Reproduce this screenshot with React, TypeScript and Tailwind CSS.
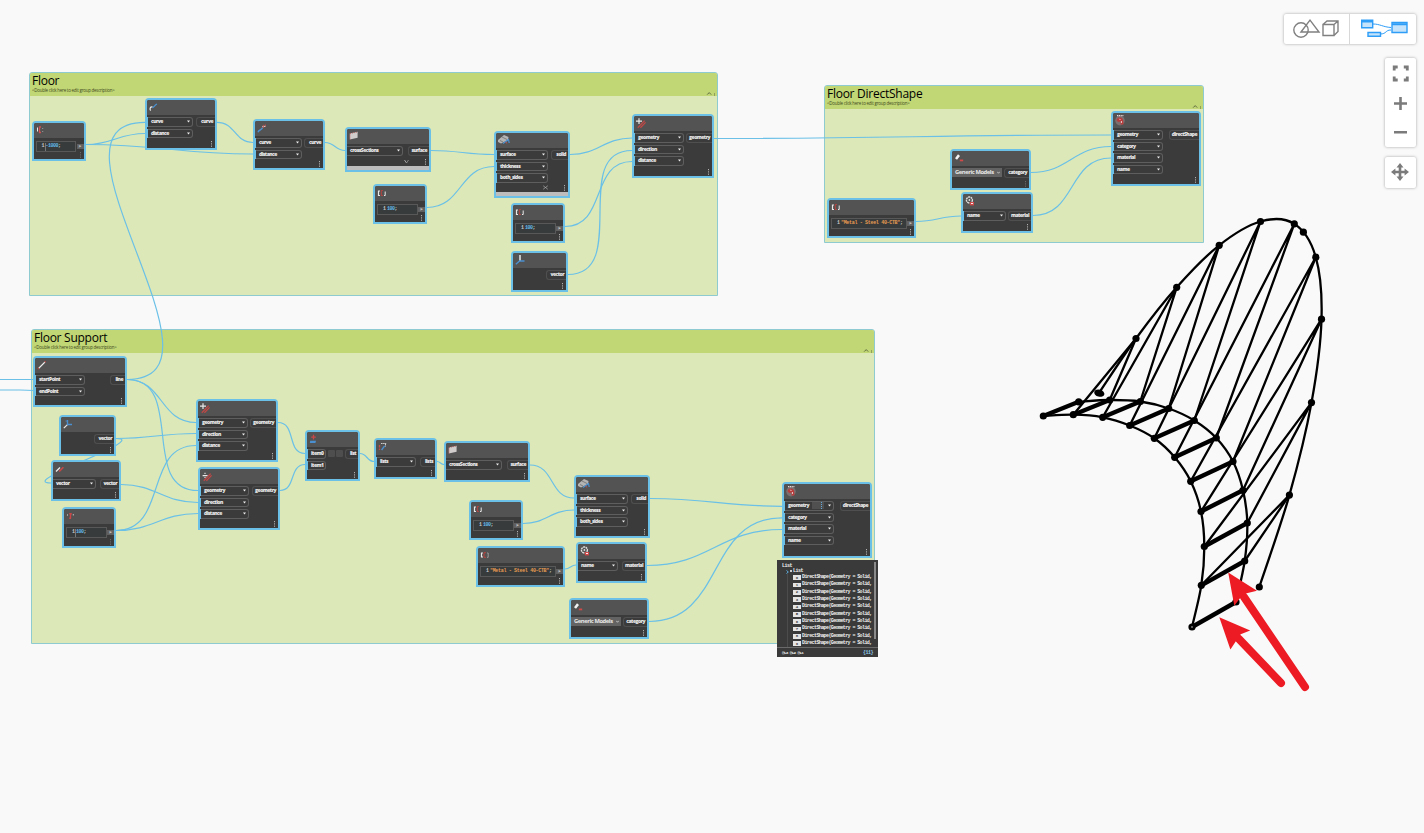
import React from "react";

type In = { label: string; w?: number; chips?: boolean };
type NodeDef = {
  x: number; y: number; w: number; h: number; icon: string;
  ins?: In[]; inW?: number; out?: string; outW?: number;
  code?: { n: string; text: string; kind: "num" | "str"; caret?: boolean };
  select?: string; strip?: boolean; faint?: boolean; plain?: boolean; mark?: "down" | "wave";
};

const L = (...names: string[]): In[] => names.map((label) => ({ label }));

const nodes: NodeDef[] = [
  { x: 31.5, y: 121, w: 54, h: 40, icon: "code1", code: { n: "1", text: "-1000", kind: "num", caret: true }, faint: true },
  { x: 145, y: 98, w: 72, h: 52, icon: "curveA", ins: L("curve", "distance"), inW: 45, out: "curve", outW: 19 },
  { x: 253, y: 119, w: 72, h: 51, icon: "curveB", ins: L("curve", "distance"), inW: 46, out: "curve", outW: 19 },
  { x: 345, y: 127, w: 86, h: 45, icon: "loft", ins: L("crossSections"), inW: 56, out: "surface", outW: 21, strip: true, mark: "down", plain: true },
  { x: 373, y: 184, w: 54, h: 40, icon: "code2", code: { n: "1", text: "100", kind: "num" } },
  { x: 494, y: 131, w: 76, h: 67, icon: "solid", ins: L("surface", "thickness", "both_sides"), inW: 51, out: "solid", outW: 17, strip: true, mark: "wave" },
  { x: 511, y: 203, w: 54, h: 40, icon: "code2", code: { n: "1", text: "100", kind: "num" } },
  { x: 511, y: 251, w: 57, h: 41, icon: "vectorZ", out: "vector", outW: 20 },
  { x: 632, y: 114, w: 82, h: 64, icon: "move", ins: L("geometry", "direction", "distance"), inW: 49, out: "geometry", outW: 26 },
  { x: 1111, y: 111, w: 90, h: 75, icon: "revit", ins: L("geometry", "category", "material", "name"), inW: 49, out: "directShape", outW: 30 },
  { x: 950, y: 149, w: 81, h: 41, icon: "tag", select: "Generic Models", out: "category", outW: 25, faint: true },
  { x: 961, y: 192, w: 72, h: 41, icon: "material", ins: L("name"), inW: 42, out: "material", outW: 23 },
  { x: 827, y: 198, w: 89, h: 40, icon: "code3", code: { n: "1", text: '"Metal - Steel 40-CTB"', kind: "str" } },
  { x: 33, y: 356, w: 94, h: 51, icon: "line", ins: L("startPoint", "endPoint"), inW: 49, out: "line", outW: 15 },
  { x: 59, y: 415, w: 57, h: 41, icon: "vectorX", out: "vector", outW: 20 },
  { x: 51, y: 460, w: 70, h: 41, icon: "reverse", ins: L("vector"), inW: 43, out: "vector", outW: 19, plain: true },
  { x: 62, y: 507, w: 54, h: 41, icon: "code4", code: { n: "1", text: "100", kind: "num", caret: true }, faint: true },
  { x: 196, y: 399, w: 82, h: 63, icon: "move", ins: L("geometry", "direction", "distance"), inW: 49, out: "geometry", outW: 26 },
  { x: 198, y: 467, w: 82, h: 63, icon: "moveDown", ins: L("geometry", "direction", "distance"), inW: 48, out: "geometry", outW: 26 },
  { x: 305, y: 430, w: 55, h: 51, icon: "list", ins: [{ label: "item0", w: 18, chips: true }, { label: "item1", w: 18 }], out: "list", outW: 13 },
  { x: 374, y: 438, w: 63, h: 41, icon: "flatten", ins: L("lists"), inW: 39, out: "lists", outW: 15 },
  { x: 444, y: 441, w: 86, h: 41, icon: "loft", ins: L("crossSections"), inW: 56, out: "surface", outW: 21, plain: true },
  { x: 469, y: 500, w: 54, h: 40, icon: "code2", code: { n: "1", text: "100", kind: "num" } },
  { x: 476, y: 546, w: 89, h: 41, icon: "code4b", code: { n: "1", text: '"Metal - Steel 40-CTB"', kind: "str" } },
  { x: 574, y: 475, w: 76, h: 63, icon: "solid", ins: L("surface", "thickness", "both_sides"), inW: 51, out: "solid", outW: 17 },
  { x: 576, y: 542, w: 71, h: 41, icon: "material", ins: L("name"), inW: 40, out: "material", outW: 23, plain: true },
  { x: 569, y: 598, w: 80, h: 41, icon: "tag", select: "Generic Models", out: "category", outW: 24 },
  { x: 782, y: 482, w: 90, h: 76, icon: "revit", ins: [{ label: "geometry", chips: true }, ...L("category", "material", "name")], inW: 49, out: "directShape", outW: 30 },
];

const groups = [
  { x: 29, y: 72, w: 689, h: 224, title: "Floor" },
  { x: 824, y: 85, w: 380, h: 158, title: "Floor DirectShape" },
  { x: 31, y: 329, w: 844, h: 315, title: "Floor Support" },
];

const wires: number[][] = [
  [86, 144.5, 145, 133.5], [86, 144.5, 253, 154], [127, 379.5, 145, 122.3], [217, 122.3, 253, 142.5],
  [325, 142.5, 345, 150.5], [431, 150.5, 494, 154.5], [427, 207.5, 494, 166.5], [570, 154.5, 632, 138],
  [565, 226.5, 632, 161.5], [568, 274.5, 632, 150.5], [714, 138.5, 1111, 135], [1031, 172.5, 1111, 146.5],
  [1033, 215.5, 1111, 158], [916, 221.5, 961, 216], [127, 379.5, 196, 422.5], [127, 379.5, 198, 490.5],
  [116, 438.5, 196, 433.5], [116, 438.5, 51, 483], [116, 530.5, 196, 445.5], [116, 530.5, 198, 513.5],
  [121, 484.5, 198, 502.5], [278, 422.5, 305, 453.5], [280, 490.5, 305, 464.5], [360, 453.5, 374, 461.5],
  [437, 461.5, 444, 464.5], [530, 465, 574, 498], [523, 523.5, 574, 510], [565, 569, 576, 565],
  [650, 498.5, 782, 506.3], [647, 565.5, 782, 529.5], [649, 621.5, 782, 517.8],
];

const wirePath = ([a, b, c, d]: number[]) => {
  const o = Math.hypot(c - a, d - b) * 0.45;
  return `M${a} ${b}C${a + o} ${b} ${c - o} ${d} ${c} ${d}`;
};

const W = "#e8e8e8", R = "#b9433f", B = "#4a90d0";
const brackets = (a: string, b: string, c: string) => (
  <g fill="none">
    <path d="M3 3H1.5V7.5H3" stroke={a} strokeWidth="1.2" />
    <path d="M5.8 2.5H4.3V7.5H5.8" stroke={b} />
    <path d="M7 7.5H8.2V3.5" stroke={c} strokeWidth="1" />
  </g>
);
const icons: Record<string, React.ReactNode> = {
  code1: (
    <g fill="none"><path d="M1.5 2.5V6.5" stroke={W} /><path d="M5 2H3.5V7.5H5" stroke="#d05050" strokeWidth="1.3" /><path d="M6.7 3v1M6.7 6v1" stroke="#999" /></g>
  ),
  code2: brackets(W, R, W),
  code3: brackets(W, R, W),
  code4: (
    <g fill="none"><path d="M1.5 3V5" stroke="#999" /><path d="M3.2 2.7H5.8M4.5 2.7V7.3M3.2 7.3H5" stroke="#c84848" strokeWidth="1.4" /><path d="M7.3 3V4.5" stroke="#bbb" /></g>
  ),
  code4b: (
    <g fill="none"><path d="M3 3H1.5V7H3" stroke={W} strokeWidth="1.2" /><path d="M6 2.7H4V7.3H6" stroke={R} /><path d="M7 3H8.2V7.3H7" stroke="#999" /></g>
  ),
  curveA: (
    <g fill="none"><path d="M3.6 5C1 4.5 .5 7 1.6 8.7" stroke={W} strokeWidth="1.2" /><path d="M3.3 5.5C5 6 5.5 3 8 2" stroke={B} strokeWidth="1.3" /></g>
  ),
  curveB: (
    <g fill="none"><path d="M1 9.3C2 6 4 8 5.5 4.8" stroke={B} strokeWidth="1.4" /><path d="M5.3 3.6L8.6 3.2" stroke="#ddd" strokeWidth="1.1" /><path d="M6.3 1.8V5M8.3 1.5V3.5" stroke="#c05050" strokeWidth="1" /></g>
  ),
  loft: (
    <g><path d="M.8 2.4L8.6 .8V6.8L.8 8.6Z" fill="#d0cccc" /><path d="M1 2.5L8.6 1M1 8.5V3" stroke={R} strokeWidth=".7" strokeDasharray="1 1" fill="none" /></g>
  ),
  solid: (
    <g><path d="M0 5L6 0L10.5 2L10 5L3 8.6L0 7Z" fill="#b4b4b4" /><path d="M4 2L9 4.5M2 5.5L5 7" stroke="#777" strokeWidth=".9" fill="none" /><path d="M5 8.5L10.5 4.5L11.2 8" stroke={B} strokeWidth="1.2" fill="none" /><path d="M7.5 7.2l1.6 1" stroke="#c85050" /></g>
  ),
  vectorZ: (
    <g fill="none"><path d="M5 0V6" stroke={W} strokeWidth="1.5" /><path d="M.8 9.2L4.6 6H9.5" stroke={B} strokeWidth="1.4" /></g>
  ),
  vectorX: (
    <g fill="none"><path d="M4.5 1V5.5H9" stroke={B} strokeWidth="1.4" /><path d="M4.2 5.8L.8 9.2" stroke={W} strokeWidth="1.2" /><path d="M2.5 2h2" stroke={B} strokeWidth=".8" /></g>
  ),
  move: (
    <g fill="none"><path d="M3 .2V6M0 3.1H6" stroke={W} strokeWidth="1.2" /><path d="M1.8 9.7L8.6 2.6M4.4 9.8L9.6 4.4" stroke="#c04845" strokeWidth="1.3" /></g>
  ),
  moveDown: (
    <g fill="none"><path d="M.6 4.6H5.6M3 1.8v1.1M3 6v1" stroke={W} strokeWidth="1.1" /><path d="M1.8 9.7L8.6 2.6M4.4 9.8L9.6 4.4" stroke="#c04845" strokeWidth="1.3" /></g>
  ),
  revit: (
    <g><circle cx="5" cy="5.6" r="4.8" fill="#7c6f6f" /><path d="M1.4 5L3 2.8L6 2.5L7.8 4L8.6 9.3L5.8 9.8L5.4 6.6L3.2 7Z" fill="#b93c3c" /><path d="M2 .7H8.4" stroke="#e8dada" strokeWidth="1.3" strokeDasharray="1.2 .6" /><path d="M4.4 3.8L5.4 5M6.4 6V8" stroke="#f0dede" strokeWidth=".9" /></g>
  ),
  tag: (
    <g><path d="M1 5.2L4 1.3L6 3L3 6.7Z" fill="#f2f2f2" /><path d="M5.8 7.4H9.2" stroke="#d04a4a" strokeWidth="1.8" /></g>
  ),
  material: (
    <g><circle cx="4.4" cy="4" r="3" fill="none" stroke="#ddd" strokeWidth="1.4" strokeDasharray="1.9 .6" /><circle cx="4.4" cy="4" r=".9" fill="#ddd" /><path d="M4.8 6H9V9.4H4.8Z" fill="#cf4a4a" /><path d="M6 7.5H8" stroke="#fff" strokeWidth=".9" /></g>
  ),
  line: (
    <g><path d="M1.5 8.5L8 2" stroke="#eee" strokeWidth="1.1" /><circle cx="1.4" cy="8.6" r=".8" fill={R} /><circle cx="8.2" cy="1.8" r=".8" fill={R} /></g>
  ),
  reverse: (
    <g><path d="M1 7.5L5 3.5" stroke="#eee" strokeWidth="1.2" /><path d="M4.2 7.5L8.4 3.2" stroke="#c84848" strokeWidth="1.6" /></g>
  ),
  list: (
    <g><path d="M4.5 .8V5.5M2.2 3.1H6.8" stroke="#c84848" strokeWidth="1.3" /><path d="M1.2 6.7H7L6.4 9H.8Z" fill={B} /></g>
  ),
  flatten: (
    <g fill="none"><path d="M1.5 3V8" stroke="#c84848" strokeWidth="1.3" strokeDasharray="2.6 .8" /><path d="M3 1.5H8.2M7.5 1.5V4.5" stroke="#ccc" strokeDasharray="1.6 .5" /><path d="M3.6 8L6.6 3.8" stroke={B} strokeWidth="1.3" /></g>
  ),
};

const Kebab = ({ faint }: { faint?: boolean }) => (
  <svg className={faint ? "block opacity-40" : "block"} width="2" height="6" viewBox="0 0 2 6">
    <path d="M.5 0V1.2M.5 2.3V3.5M.5 4.6V5.8" stroke="#b0b0b0" strokeWidth="1" />
  </svg>
);

const Label = ({ children }: { children: React.ReactNode }) => (
  <span className="text-[5px] font-extrabold leading-none tracking-[-0.52px] text-[#ececec]">{children}</span>
);

function GraphNode({ n }: { n: NodeDef }) {
  return (
    <div
      className="absolute flex flex-col rounded-t-[4px] border-2 border-[#6ac0e7] bg-[#3b3b3b]"
      style={{ left: n.x, top: n.y, width: n.w, height: n.h }}
    >
      <div className="h-[15px] shrink-0 rounded-t-[2px] bg-[#535353] pl-[2px] pt-[2px]">
        <svg className="block overflow-visible" width="11" height="11" viewBox="0 0 11 11">{icons[n.icon]}</svg>
      </div>
      {n.code && (
        <div className="flex items-center justify-between pl-[2px] pt-[3px]">
          <div
            className="flex h-[11px] items-center border border-[#585858] bg-[#373b3b] pl-[5px] font-['Liberation_Mono'] text-[5px] font-bold leading-none"
            style={{ width: n.w - 13.5 }}
          >
            <span className="w-[3px] text-[#c8c8c8]">{n.code.n}</span>
            <span className={n.code.caret ? "h-[8px] w-px bg-[#777]" : "w-[1px]"} />
            <span className={n.code.kind === "num" ? "tracking-[-0.5px] text-[#62b8e8]" : "whitespace-pre tracking-[-0.32px] text-[#e59a52]"}>{n.code.text}</span>
            <span className="text-[#d0d0d0]">;</span>
          </div>
          <div className="flex h-[5px] w-[7px] items-center justify-center bg-[#606060] text-[5px] font-bold leading-none text-[#ddd]">&gt;</div>
        </div>
      )}
      {!n.code && (
        <div className="flex justify-between pt-[2px]">
          <div className="flex flex-col gap-[2px]">
            {n.select && (
              <div className="flex h-[9px] w-[50px] items-center justify-between bg-[#636363] pl-[3px] pr-[2px]">
                <span className="whitespace-nowrap text-[5.8px] font-bold leading-none tracking-[-0.42px] text-[#e8e8e8]">{n.select}</span>
                <svg width="3" height="3" viewBox="0 0 4 4"><path d="M.3 1L2 3L3.7 1" fill="none" stroke="#ddd" /></svg>
              </div>
            )}
            {n.ins?.map((p) => (
              <div key={p.label} className="flex items-center">
                <span className={n.plain ? "h-[9.5px] w-0" : "-ml-[2px] h-[9.5px] w-[3px] bg-[#6ac0e7]"} />
                <div
                  className="flex h-[9.5px] items-center justify-between rounded-r-[3px] border border-l-0 border-[#5e5e5e] pl-[3px] pr-[2px]"
                  style={{ width: p.w ?? n.inW }}
                >
                  <Label>{p.label}</Label>
                  {p.chips && !p.w && <span className="ml-[3px] h-[7px] flex-1 bg-[#505050]"><span className="ml-auto block h-[7px] w-[3px] border-l border-dotted border-[#62a8d8]" /></span>}
                  {!p.w && (
                    <svg className={p.chips ? "ml-[4px]" : ""} width="3" height="3" viewBox="0 0 3 3"><path d="M0 .5H3L1.5 2.6Z" fill="#eee" /></svg>
                  )}
                </div>
                {p.chips && p.w && (
                  <div className="ml-[2px] flex gap-[1px]">
                    <span className="h-[7px] w-[7px] rounded-[1px] bg-[#4e4e4e]" />
                    <span className="h-[7px] w-[7px] rounded-[1px] bg-[#4e4e4e]" />
                  </div>
                )}
              </div>
            ))}
          </div>
          <div
            className="flex h-[9.5px] items-center justify-end rounded-l-[3px] border border-r-0 border-[#4f4f4f] pr-[2px]"
            style={{ width: n.outW }}
          >
            <Label>{n.out}</Label>
          </div>
        </div>
      )}
      <div className="mt-auto flex items-end justify-end gap-[16px] pb-[1px] pr-[2px]">
        {n.mark && (
          <svg className="mb-px" width="5" height="5" viewBox="0 0 5 5"><path d={n.mark === "down" ? "M.5 1L2.5 4L4.5 1" : "M.5 1L4.5 4M.5 4L4.5 1"} fill="none" stroke="#bbb" strokeDasharray="1 .4" /></svg>
        )}
        <Kebab faint={n.faint} />
      </div>
      {n.strip && <div className="h-[4px] shrink-0 bg-[#bdbdbd]" />}
    </div>
  );
}

function Group({ g }: { g: (typeof groups)[number] }) {
  return (
    <div
      className="absolute flex flex-col overflow-hidden rounded-t-[3px] border border-[#8ecbd0] bg-[#dce8b8]"
      style={{ left: g.x, top: g.y, width: g.w, height: g.h }}
    >
      <div className="flex h-[23px] items-end justify-between bg-[#c1d675] pl-[2px]">
        <div className="flex h-full flex-col">
          <span className="whitespace-nowrap font-['Open_Sans',sans-serif] text-[12px] leading-[16px] tracking-[-0.26px] text-black">{g.title}</span>
          <span className="whitespace-nowrap text-[4.4px] leading-[3px] tracking-[-0.21px] text-[#3f4a20]">&lt;Double click here to edit group description&gt;</span>
        </div>
        <svg className="-mb-px" width="11" height="6" viewBox="0 0 11 6">
          <path d="M1.2 3.6L3.2 1.6L5.2 3.6" fill="none" stroke="#55603a" strokeWidth=".9" />
          <path d="M8.5 2.5V4.5" stroke="#55603a" strokeWidth=".9" strokeDasharray="1 .5" />
        </svg>
      </div>
    </div>
  );
}

const outer = [[1136, 338.5], [1176.7, 287.3], [1219.2, 245.3], [1260.5, 221.5], [1294.3, 223.9], [1315.8, 257.2], [1321.5, 319.2], [1311.5, 402.6], [1289.4, 495.1]];
const upper = [[1078.7, 401.8], [1109.7, 400], [1140.3, 401.5], [1168.7, 408.5], [1194.3, 420.5], [1216.3, 438], [1233, 461.5], [1243, 490.3], [1247.3, 523], [1244.7, 561], [1236, 602]];
const lower = [[1043.3, 416], [1073.3, 414.7], [1102.7, 417.3], [1129.7, 425.5], [1154.3, 438.3], [1174.7, 457.3], [1190.7, 481.3], [1201, 511.5], [1204.3, 546.5], [1201.3, 585.3], [1192, 627]];

// Catmull-Rom spline through the given points
const spline = (p: number[][]) => {
  let d = `M${p[0][0]} ${p[0][1]}`;
  for (let i = 0; i < p.length - 1; i++) {
    const a = p[i - 1] ?? p[i], b = p[i], c = p[i + 1], e = p[i + 2] ?? c;
    d += `C${b[0] + (c[0] - a[0]) / 6} ${b[1] + (c[1] - a[1]) / 6} ${c[0] - (e[0] - b[0]) / 6} ${c[1] - (e[1] - b[1]) / 6} ${c[0]} ${c[1]}`;
  }
  return d;
};

const dots = [...outer, [1303.4, 232.2], [1259.3, 587], ...upper, ...lower];

function Geometry() {
  return (
    <g stroke="#000" fill="none" strokeWidth="2.3">
      <path d={spline([[1099, 393], ...outer, [1259.3, 587]])} />
      <path d={spline(upper)} />
      <path d={spline(lower)} />
      {outer.map((p, i) => (
        <path key={i} d={`M${upper[i + 1].join(" ")}L${p.join(" ")}L${lower[i + 1].join(" ")}`} strokeWidth="2.3" />
      ))}
      {upper.map((p, i) => (
        <path key={i} d={`M${p.join(" ")}L${lower[i].join(" ")}`} strokeWidth="4.4" />
      ))}
      <g fill="#000" stroke="none">
        {dots.map(([x, y], i) => <circle key={i} cx={x} cy={y} r="3.6" />)}
        <ellipse cx="1099.3" cy="393.2" rx="5.2" ry="3.5" transform="rotate(15 1099.3 393.2)" />
      </g>
      <circle cx="1192" cy="627" r="1" fill="#777" stroke="none" />
      <g stroke="#ed1c24" fill="#ed1c24" strokeLinecap="round" strokeWidth="8">
        <path d="M1281 683L1239 639" />
        <path d="M1305 687L1244 597" />
        <path stroke="none" d="M1219.3 617.2L1250.2 630.5L1240.7 634.3L1235.7 641.5L1230.4 649.5Z" />
        <path stroke="none" d="M1228.2 572.5L1257 590.7L1246.7 593.3L1240.7 597.3L1234.3 605.7Z" />
      </g>
    </g>
  );
}

function Preview() {
  return (
    <div className="absolute left-[777px] top-[560px] flex h-[97px] w-[101px] flex-col bg-[#3a3a3a] font-['Liberation_Mono'] text-[5px] font-bold leading-none text-[#f0f0f0]">
      <div className="flex h-[87px] justify-between pt-[4px]">
        <div className="flex flex-col pl-[5px]">
          <div className="h-[5px] tracking-[-0.5px]">List</div>
          <div className="flex h-[5px] items-center gap-[1px] pl-[4px]">
            <svg width="3" height="4" viewBox="0 0 3 4"><path d="M.5 .5L2.3 2L.5 3.5" fill="none" stroke="#5fb0e0" /></svg>
            <span className="mb-[2px] h-[2px] w-[2px] bg-[#ccc]" />
            <span className="tracking-[-0.5px]">List</span>
          </div>
          <div className="ml-[5px] flex flex-col border-l border-[#4c4c4c] pl-[5px]">
            {Array.from({ length: 10 }, (_, i) => (
              <div key={i} className="flex h-[7.33px] items-center gap-[1px]">
                <span className="flex h-[4.5px] w-[8px] shrink-0 items-center justify-center bg-[#e4e4e4] text-[4px] text-[#444]">{i}</span>
                <span className="whitespace-pre tracking-[-0.6px]">DirectShape(Geometry = Solid,</span>
              </div>
            ))}
          </div>
        </div>
        <div className="-mt-[2px] mr-[2px] h-[77px] w-[2px] shrink-0 bg-[#8a8a8a]" />
      </div>
      <div className="flex flex-1 items-center justify-between border-t border-[#6a6a6a] pl-[5px] pr-[5px] pt-px">
        <span className="text-[4.4px] tracking-[-0.7px]">@L3 @L2 @L1</span>
        <span className="tracking-[-0.5px] text-[#8cc8e8]">{"{11}"}</span>
      </div>
    </div>
  );
}

const card = "rounded-[2px] bg-white shadow-[0_0_3px_rgba(0,0,0,0.35)]";

function Controls() {
  return (
    <div className="absolute right-[8.5px] top-[13.5px] flex flex-col items-end text-[#7b7b7b]">
      <div className={`flex h-[30px] w-[132px] ${card}`}>
        <button className="flex w-[66.5px] items-center justify-center border-r border-[#d8d8d8]">
          <svg className="-ml-px" width="48" height="20" viewBox="0 0 48 20" fill="none" stroke="#808080" strokeWidth="1.4">
            <circle cx="9" cy="11" r="7.2" />
            <path d="M9 13L18 1.2L27 13Z" />
            <path d="M31 5.5H42V16.5H31ZM31 5.5L35 2H46V12.5L42 16.5M42 5.5L46 2" />
          </svg>
        </button>
        <button className="flex w-[65.5px] items-center justify-center">
          <svg className="-mt-px ml-[2px]" width="48" height="20" viewBox="0 0 48 20" fill="#c5e4fb" stroke="#2e9df7" strokeWidth="1.4">
            <path d="M13 6C20 6 23 9 31 9.5M20 16C27 16 25 12 31 12" fill="none" strokeWidth="1" />
            <path d="M1.7 2.2H12.7V9.7H1.7ZM8 14.5H20.5V18.3H8ZM32 4.5H47V14.5H32Z" />
            <path d="M1.7 3.4H12.7M32 6.3H47" strokeWidth="2" />
          </svg>
        </button>
      </div>
      <div className={`mt-[14px] flex h-[89px] w-[31px] flex-col items-center ${card}`}>
        <svg width="31" height="89" viewBox="0 0 31 89" fill="none" stroke="#7b7b7b">
          <path d="M9.2 12.5V9H12.7M18.8 9H22.3V12.5M22.3 18.5V22H18.8M12.7 22H9.2V18.5" strokeWidth="2.8" />
          <path d="M15.5 39V52M9 45.5H22M9 74.2H22" strokeWidth="2.6" />
        </svg>
      </div>
      <div className={`mt-[10px] flex h-[31px] w-[31px] items-center justify-center ${card}`}>
        <svg width="18" height="18" viewBox="0 0 18 18">
          <path d="M9 3V15M3 9H15" stroke="#7b7b7b" strokeWidth="2.6" />
          <path d="M9 0L12.5 4.4H5.5ZM9 18L5.5 13.6H12.5ZM0 9L4.4 5.5V12.5ZM18 9L13.6 12.5V5.5Z" fill="#7b7b7b" />
        </svg>
      </div>
    </div>
  );
}

export default function App() {
  return (
    <main className="relative h-[833px] w-[1424px] overflow-hidden bg-[#f9f9f9] font-['Open_Sans',sans-serif]">
      {groups.map((g) => <Group key={g.title} g={g} />)}
      <svg className="absolute inset-0" width="1424" height="833" viewBox="0 0 1424 833">
        <g fill="none" stroke="#6ac0e7" strokeWidth="1.2">
          <path d="M0 379.5H34M0 390H20L34 390.5" />
          {wires.map((w, i) => <path key={i} d={wirePath(w)} />)}
        </g>
        <Geometry />
      </svg>
      {nodes.map((n, i) => <GraphNode key={i} n={n} />)}
      <Preview />
      <Controls />
    </main>
  );
}
